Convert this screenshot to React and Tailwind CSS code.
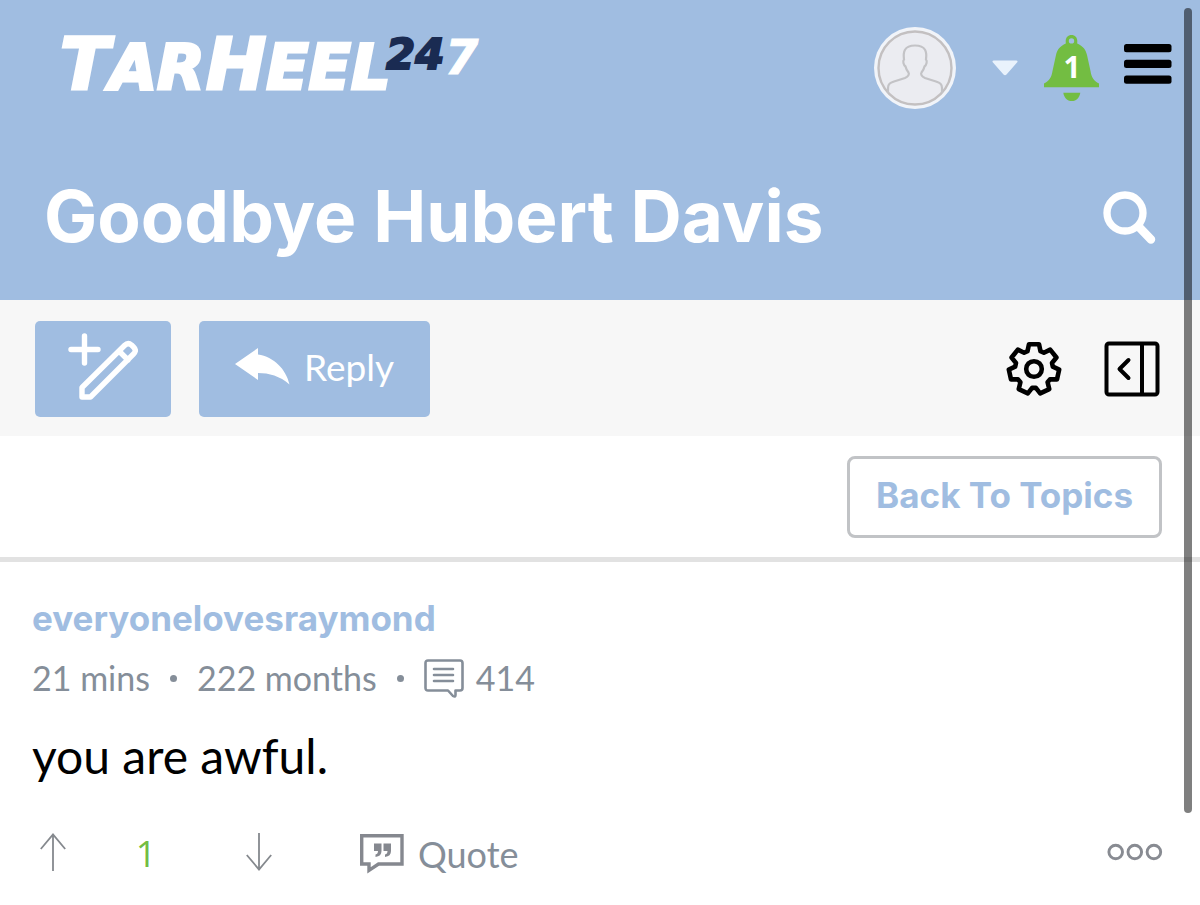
import React from "react";

function Logo() {
  return (
    <svg width="450" height="96" viewBox="0 0 450 96" role="img" aria-label="TarHeel 247" className="block font-['DejaVu_Sans',sans-serif] font-bold italic">
      <g fill="#ffffff" stroke="#ffffff" strokeWidth="3">
        <text x="12" y="75" fontSize="72">
          T<tspan fontSize="62">AR</tspan>
        </text>
        <text x="158" y="75" fontSize="72">
          H<tspan fontSize="62">EEL</tspan>
        </text>
        <text x="397" y="60" fontSize="48" strokeWidth="1">7</text>
      </g>
      <text x="338" y="55" fontSize="42" fill="#1a2b52" stroke="#1a2b52" strokeWidth="2">24</text>
    </svg>
  );
}

function Avatar() {
  return (
    <svg width="82" height="82" viewBox="0 0 82 82" fill="none" aria-hidden="true">
      <circle cx="41" cy="41" r="41" fill="#f1f4f9" />
      <circle cx="41" cy="41" r="36.5" fill="#ebecf1" stroke="#c3c0c1" strokeWidth="2.4" />
      <path
        d="M14 66V61C14 57 16 56 20 54.500L31 51C34.500 49.500 35.500 47 34.500 45.500C33 43.500 32 42 31.500 39.500C29.500 38 28.500 34 30 32.500C29 25 30 18.500 41 18.500S53 25 52 32.500C53.500 34 52.500 38 50.500 39.500C50 42 49 43.500 47.500 45.500C46.500 47 47.500 49.500 51 51L62 54.500C66 56 68 57 68 61V66"
        stroke="#c3c3c6"
        strokeWidth="2.2"
      />
    </svg>
  );
}

function BellIcon() {
  return (
    <svg width="56" height="66" viewBox="0 0 56 66" fill="#73bd42" aria-hidden="true">
      <path
        fillRule="evenodd"
        d="M27.500 0C31 0 33.300 2.600 33.300 6L33.200 8.500C39 11 42 15 43 20L46.500 36C47.500 42 49.500 46 55 48.500V52.300H0V48.500C5.500 46 7.500 42 8.500 36L12 20C13 15 16 11 21.800 8.500L21.700 6C21.700 2.600 24 0 27.500 0ZM27.500 3.200A2.700 2.700 0 1 0 27.500 8.600A2.700 2.700 0 1 0 27.500 3.200Z"
      />
      <path d="M19.300 57.700H36.300C35.500 62.500 32.500 66 27.800 66S20 62.500 19.300 57.700Z" />
    </svg>
  );
}

const GEAR_PATH =
  Array.from({ length: 7 }, (_, i) =>
    [[-20, 19], [-11.5, 25.2], [11.5, 25.2], [20, 19]].map(([offset, r]) => {
      const a = ((i * 360) / 7 + offset - 90) * (Math.PI / 180);
      return `${(28 + r * Math.cos(a)).toFixed(2)} ${(28 + r * Math.sin(a)).toFixed(2)}`;
    })
  )
    .flat()
    .map((p, i) => (i ? "L" : "M") + p)
    .join("") + "Z";

function GearIcon() {
  return (
    <svg width="56" height="56" viewBox="0 0 56 56" fill="none" stroke="#000" strokeWidth="4.6" strokeLinejoin="round" aria-hidden="true">
      <path d={GEAR_PATH} />
      <circle cx="28" cy="28" r="7.8" />
    </svg>
  );
}

function PanelIcon() {
  return (
    <svg width="56" height="56" viewBox="0 0 56 56" fill="none" stroke="#000" strokeWidth="4" strokeLinecap="round" strokeLinejoin="round" aria-hidden="true">
      <rect x="2.500" y="2.500" width="51" height="51" rx="2.500" />
      <path d="M38 3V53M24.500 19L15.500 28L24.500 37" />
    </svg>
  );
}

function ComposeIcon() {
  return (
    <svg width="70" height="68" viewBox="0 0 70 68" fill="none" stroke="#fff" strokeWidth="5.4" strokeLinecap="round" strokeLinejoin="round" aria-hidden="true">
      <path d="M16.500 3V30M3 16.500H30" />
      <path d="M14 64V54.500L56.500 12.500Q60 9 63.500 12L65.500 14Q69 17.500 65.500 21L22.500 64ZM51 18L60 27" />
    </svg>
  );
}

function Dot() {
  return <span className="mx-5 size-[7px] rounded-full bg-[#858e99]" aria-hidden="true" />;
}

function App() {
  return (
    <div className="relative bg-white font-['Lato',sans-serif] text-[#858e99]">
      <header className="bg-[#a0bde1] text-white">
        <div className="flex h-[136px] items-center justify-between pr-7 pl-12">
          <a href="#home" aria-label="TarHeel 247" className="mb-3">
            <Logo />
          </a>
          <nav aria-label="Account" className="flex items-center">
            <button type="button" aria-label="Profile">
              <Avatar />
            </button>
            <button type="button" aria-label="Profile menu" className="ml-9">
              <svg width="26" height="16" viewBox="0 0 26 16" fill="#e9f2fc" aria-hidden="true">
                <path d="M2 .500H24Q26.500 .800 25 2.500L14.500 14.500Q13 16 11.500 14.500L1 2.500Q-.500 .800 2 .500Z" />
              </svg>
            </button>
            <button type="button" aria-label="Notifications" className="relative ml-[26px]">
              <BellIcon />
              <span className="absolute inset-x-0 top-4 text-center font-['Open_Sans',sans-serif] text-[30px] leading-8 font-bold">1</span>
            </button>
            <button type="button" aria-label="Menu" className="mb-2 ml-6">
              <svg width="48" height="40" viewBox="0 0 48 40" fill="#000" aria-hidden="true">
                <rect width="47.500" height="8.300" rx="2.500" />
                <rect y="15.700" width="47.500" height="8.300" rx="2.500" />
                <rect y="31.400" width="47.500" height="8.300" rx="2.500" />
              </svg>
            </button>
          </nav>
        </div>
        <div className="flex h-[164px] items-center justify-between pr-[43px] pb-1 pl-11">
          <h1 className="font-['Inter',sans-serif] text-[71px] leading-[88px] font-bold">Goodbye Hubert Davis</h1>
          <button type="button" aria-label="Search" className="mt-1">
            <svg width="54" height="54" viewBox="0 0 54 54" fill="none" stroke="#fff" strokeLinecap="round" aria-hidden="true">
              <circle cx="22" cy="22" r="18" strokeWidth="7.300" />
              <path d="M36 36L48 48.500" strokeWidth="8.500" />
            </svg>
          </button>
        </div>
      </header>

      <div className="flex h-[136px] items-center justify-between bg-[#f7f7f7] pt-px pr-10 pl-[35px]">
        <div className="flex gap-7">
          <button type="button" aria-label="New topic" className="flex h-24 w-[136px] items-center justify-center rounded-[5px] bg-[#a0bde1] pb-1">
            <ComposeIcon />
          </button>
          <button type="button" className="flex h-24 items-center gap-3.5 rounded-[5px] bg-[#a0bde1] px-9 pb-1 text-[37px] leading-10 text-white">
            <svg width="55" height="37" viewBox="0 0 55 37" fill="#fff" aria-hidden="true">
              <path d="M0 16L23 0V6.500C39 9 51 21 54.500 36.500C45 28 34 25 23 25V32Z" />
            </svg>
            Reply
          </button>
        </div>
        <div className="flex gap-[42px]">
          <button type="button" aria-label="Settings">
            <GearIcon />
          </button>
          <button type="button" aria-label="Open side panel">
            <PanelIcon />
          </button>
        </div>
      </div>

      <div className="flex justify-end border-b-[5px] border-[#e2e2e2] px-[38px] pt-5 pb-[19px]">
        <a href="#topics" className="flex h-[82px] items-center rounded-lg border-[3px] border-[#c1c3c6] px-[26px] pb-1 font-['Inter',sans-serif] text-[35px] leading-10 font-bold text-[#a0bde1]">
          Back To Topics
        </a>
      </div>

      <article className="px-8 pt-9">
        <a href="#user" className="block font-['Inter',sans-serif] text-[35px] leading-10 font-bold text-[#a0bde1]">everyonelovesraymond</a>
        <div className="mt-[18px] flex h-11 items-center text-[34px] leading-10">
          <span>21 mins</span>
          <Dot />
          <span>222 months</span>
          <Dot />
          <svg width="40" height="39" viewBox="0 0 40 39" fill="none" stroke="#858e99" strokeWidth="2.600" strokeLinecap="round" strokeLinejoin="round" aria-hidden="true">
            <path d="M4 1.500H36Q38.500 1.500 38.500 4V29Q38.500 31.500 36 31.500H31.500V36Q31.500 38.500 29 37L24 31.500H4Q1.500 31.500 1.500 29V4Q1.500 1.500 4 1.500Z" />
            <path d="M10 10H29M10 16H29M10 22H29" />
          </svg>
          <span className="ml-3">414</span>
        </div>
        <p className="mt-[26px] text-[48px] leading-[60px] text-black">you are awful.</p>
        <div className="mt-9 flex h-16 items-center pr-[5px] pl-2 text-[36px] leading-10">
          <button type="button" aria-label="Upvote" className="mb-1">
            <svg width="26" height="38" viewBox="0 0 26 38" fill="none" stroke="#85898e" strokeWidth="1.800" aria-hidden="true">
              <path d="M13 38V1.500M.800 16L13 1.500L25.200 16" />
            </svg>
          </button>
          <span className="w-[180px] pr-5 text-center font-['Open_Sans',sans-serif] font-medium text-[#73bd42]">1</span>
          <button type="button" aria-label="Downvote" className="mb-1">
            <svg width="26" height="38" viewBox="0 0 26 38" fill="none" stroke="#85898e" strokeWidth="1.800" aria-hidden="true">
              <path d="M13 0V36.500M.800 22L13 36.500L25.200 22" />
            </svg>
          </button>
          <button type="button" className="ml-[88px] flex items-center gap-3.5">
            <svg width="44" height="40" viewBox="0 0 44 40" fill="#85888f" aria-hidden="true">
              <path d="M1.700 1.700H42V30H18.500L9 36.300V30H1.700Z" fill="none" stroke="#85888f" strokeWidth="3.400" />
              <path d="M14 9.500H21.500V17C21.500 20.500 19.500 22.500 15.500 23V20.500C17.500 20 18 18.500 18 17H14ZM23.500 9.500H31V17C31 20.500 29 22.500 25 23V20.500C27 20 27.500 18.500 27.500 17H23.500Z" />
            </svg>
            Quote
          </button>
          <button type="button" aria-label="More options" className="mb-1 ml-auto">
            <svg width="56" height="18" viewBox="0 0 56 18" fill="none" stroke="#888b92" strokeWidth="2.900" aria-hidden="true">
              <circle cx="8.700" cy="9" r="6.800" />
              <circle cx="27.800" cy="9" r="6.800" />
              <circle cx="46.900" cy="9" r="6.800" />
            </svg>
          </button>
        </div>
      </article>

      <div className="absolute top-2 right-2 h-[805px] w-2 rounded-full bg-black/50" aria-hidden="true" />
    </div>
  );
}

export default App;
